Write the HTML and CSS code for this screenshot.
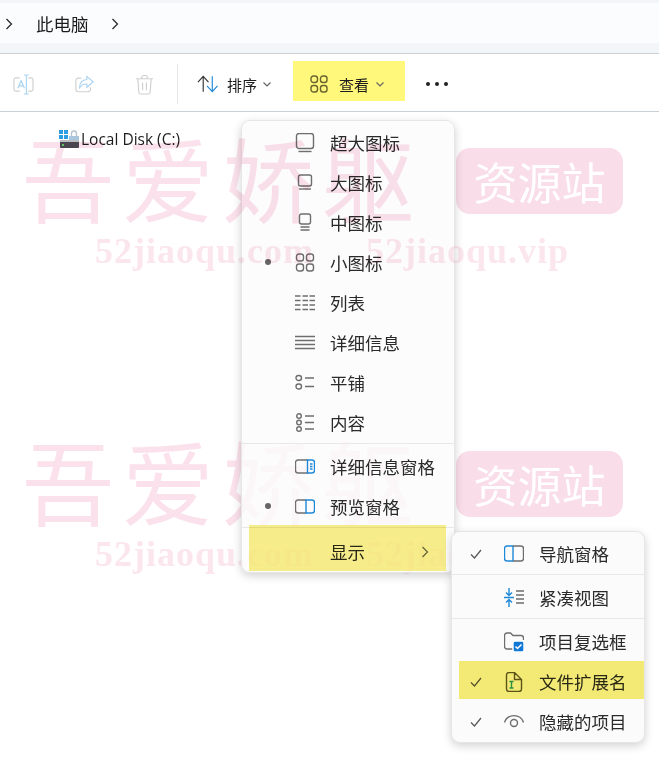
FILE: index.html
```html
<!DOCTYPE html>
<html lang="zh-CN">
<head>
    <meta charset="UTF-8">
    <meta name="viewport" content="width=device-width, initial-scale=1.0">
    <title>此电脑</title>
    <link rel="stylesheet" href="styles.css">
</head>
<body>
    <!-- Address bar -->
    <header class="address-bar">
        <div class="crumbs">
            <svg class="crumb-arrow" viewBox="0 0 8 12"><path d="M1.5 1l5 5-5 5"/></svg>
            <span class="crumb-name">此电脑</span>
            <svg class="crumb-arrow" viewBox="0 0 8 12"><path d="M1.5 1l5 5-5 5"/></svg>
        </div>
    </header>

    <!-- Command bar -->
    <nav class="toolbar">
        <svg class="tool-icon rename" viewBox="0 0 22 22">
            <path class="faint-gray" d="M7 4H3a2 2 0 0 0-2 2v10a2 2 0 0 0 2 2h4M16 4h3a2 2 0 0 1 2 2v10a2 2 0 0 1-2 2h-3"/>
            <path class="faint-blue" d="M5 15l3.5-8L12 15M6 12.5h5M11.5 1h5M11.5 21h5M14 1v20"/>
        </svg>
        <svg class="tool-icon share" viewBox="0 0 22 22">
            <path class="faint-gray" d="M7 4H4a3 3 0 0 0-3 3v9a3 3 0 0 0 3 3h10a3 3 0 0 0 3-3v-2"/>
            <path class="faint-blue" d="M13 2l7 6-7 6v-3.500c-4 0-6 1-8 4 0-5 3-8.500 8-9z"/>
        </svg>
        <svg class="tool-icon trash" viewBox="0 0 20 22">
            <path class="faint-gray" d="M1 5h18M7 5V3.500A2 2 0 0 1 9 1.500h2a2 2 0 0 1 2 2V5M3 5l1 14a2 2 0 0 0 2 2h8a2 2 0 0 0 2-2l1-14M8 9v8M12 9v8"/>
        </svg>
        <span class="tool-divider"></span>
        <button class="tool-btn sort-btn">
            <svg class="sort-icon" viewBox="0 0 22 18">
                <path class="line-dark" d="M1 7l5.500-6L12 7M6.500 1v16"/>
                <path class="line-blue" d="M10.500 11l5.500 6 5.500-6M16 17V1"/>
            </svg>
            <span>排序</span>
            <svg class="chevron" viewBox="0 0 8 5"><path d="M.5.500L4 4 7.500.500"/></svg>
        </button>
        <button class="tool-btn view-btn">
            <svg class="view-icon" viewBox="0 0 18 18">
                <rect x="1" y="1" width="6.500" height="6.500" rx="2.500"/>
                <rect x="10.500" y="1" width="6.500" height="6.500" rx="2.500"/>
                <rect x="1" y="10.500" width="6.500" height="6.500" rx="2.500"/>
                <rect x="10.500" y="10.500" width="6.500" height="6.500" rx="2.500"/>
            </svg>
            <span>查看</span>
            <svg class="chevron" viewBox="0 0 8 5"><path d="M.5.500L4 4 7.500.500"/></svg>
        </button>
        <div class="more-dots"><i></i><i></i><i></i></div>
    </nav>

    <!-- File list -->
    <main class="file-list">
        <div class="file-item">
            <svg class="disk-icon" viewBox="0 0 20 19">
                <rect x="0" y="0" width="4" height="4" fill="#2d9ce0"/>
                <rect x="5" y="0" width="4" height="4" fill="#2d9ce0"/>
                <rect x="0" y="5" width="4" height="4" fill="#2d9ce0"/>
                <rect x="5" y="5" width="4" height="4" fill="#2d9ce0"/>
                <path d="M12.500 6V3.500a2.500 2.500 0 0 1 5 0V6" fill="none" stroke="#b8c2ca" stroke-width="1.300"/>
                <rect x="10" y="6" width="10" height="6" fill="#a9c6dc"/>
                <rect x="1" y="11" width="19" height="7" rx="1" fill="#4a4f55"/>
                <rect x="1" y="10" width="19" height="2" fill="#b9bec2"/>
                <rect x="3" y="14" width="2" height="2" fill="#5fe070"/>
            </svg>
            <span>Local Disk (C:)</span>
        </div>
    </main>

    <!-- Lower watermark sits behind the menus -->
    <div class="watermark mark-lower">
        <span class="mark-title">吾爱娇躯</span>
        <span class="mark-badge">资源站</span>
        <span class="mark-url url-com">52jiaoqu.com</span>
        <span class="mark-url url-vip">52jiaoqu.vip</span>
    </div>

    <!-- View menu -->
    <div class="menu view-menu">
        <ul class="menu-group">
            <li class="menu-row">
                <span class="row-mark"></span>
                <svg class="row-icon" viewBox="0 0 20 20"><rect x="1.500" y="0.500" width="17" height="15" rx="2.500"/><path d="M3.500 18.500h13"/></svg>
                <span>超大图标</span>
            </li>
            <li class="menu-row">
                <span class="row-mark"></span>
                <svg class="row-icon" viewBox="0 0 20 20"><rect x="3.500" y="2" width="13" height="11" rx="2"/><path d="M4 16h12"/></svg>
                <span>大图标</span>
            </li>
            <li class="menu-row">
                <span class="row-mark"></span>
                <svg class="row-icon" viewBox="0 0 20 20"><rect x="4.500" y="1" width="11" height="10" rx="2"/><path d="M5.500 14h9M5.500 17h9"/></svg>
                <span>中图标</span>
            </li>
            <li class="menu-row">
                <span class="row-mark"><i class="dot"></i></span>
                <svg class="row-icon" viewBox="0 0 20 20"><rect x="1.500" y="1" width="7" height="7" rx="2.500"/><rect x="11.500" y="1" width="7" height="7" rx="2.500"/><rect x="1.500" y="11" width="7" height="7" rx="2.500"/><rect x="11.500" y="11" width="7" height="7" rx="2.500"/></svg>
                <span>小图标</span>
            </li>
            <li class="menu-row">
                <span class="row-mark"></span>
                <svg class="row-icon" viewBox="0 0 20 20"><path d="M0 3h5.500M0 7.500h5.500M0 12h5.500M0 16.500h5.500M7.500 3h5.500M7.500 7.500h5.500M7.500 12h5.500M7.500 16.500h5.500M14.500 3h5.500M14.500 7.500h5.500M14.500 12h5.500M14.500 16.500h5.500"/></svg>
                <span>列表</span>
            </li>
            <li class="menu-row">
                <span class="row-mark"></span>
                <svg class="row-icon" viewBox="0 0 20 20"><path d="M0 3.500h20M0 7.500h20M0 11.500h20M0 15.500h20"/></svg>
                <span>详细信息</span>
            </li>
            <li class="menu-row">
                <span class="row-mark"></span>
                <svg class="row-icon" viewBox="0 0 20 20"><rect x="1" y="2.500" width="5.500" height="5" rx="2.500"/><rect x="1" y="11" width="5.500" height="5" rx="2.500"/><path d="M10 5h9M10 13.500h9"/></svg>
                <span>平铺</span>
            </li>
            <li class="menu-row">
                <span class="row-mark"></span>
                <svg class="row-icon" viewBox="0 0 20 20"><circle cx="4" cy="3" r="2.300"/><circle cx="4" cy="9.500" r="2.300"/><circle cx="4" cy="16" r="2.300"/><path d="M10 3h9M10 9.500h9M10 16h9"/></svg>
                <span>内容</span>
            </li>
        </ul>
        <ul class="menu-group">
            <li class="menu-row">
                <span class="row-mark"></span>
                <svg class="row-icon" viewBox="0 0 20 20"><path d="M13 3H3a2.500 2.500 0 0 0-2.500 2.500v8A2.500 2.500 0 0 0 3 16h10"/><path class="line-blue" d="M12.500 3h4.500a2.500 2.500 0 0 1 2.500 2.500v8a2.500 2.500 0 0 1-2.500 2.500h-4.500zM15 7h2.500M15 9.500h2.500M15 12h2.500"/></svg>
                <span>详细信息窗格</span>
            </li>
            <li class="menu-row">
                <span class="row-mark"><i class="dot"></i></span>
                <svg class="row-icon" viewBox="0 0 20 20"><path d="M11 3H3a2.500 2.500 0 0 0-2.500 2.500v8A2.500 2.500 0 0 0 3 16h8"/><path class="line-blue" d="M11 3h6a2.500 2.500 0 0 1 2.500 2.500v8A2.500 2.500 0 0 1 17 16h-6zM11 3v13"/></svg>
                <span>预览窗格</span>
            </li>
        </ul>
        <div class="menu-row show-row">
            <span class="row-mark"></span>
            <span class="row-icon"></span>
            <span>显示</span>
            <svg class="row-arrow" viewBox="0 0 8 12"><path d="M1.500 1l5 5-5 5"/></svg>
        </div>
    </div>

    <!-- Show submenu -->
    <div class="menu show-menu">
        <div class="sub-row">
            <svg class="row-check" viewBox="0 0 12 10"><path d="M1 5.500L4.500 9 11 1"/></svg>
            <svg class="row-icon" viewBox="0 0 20 20"><path class="line-blue" d="M9 2H3A2.500 2.500 0 0 0 .5 4.500v10A2.500 2.500 0 0 0 3 17h6zM9 2v15"/><path d="M9 2h8a2.500 2.500 0 0 1 2.500 2.500v10A2.500 2.500 0 0 1 17 17H9"/></svg>
            <span>导航窗格</span>
        </div>
        <div class="sub-row ruled">
            <span class="row-check"></span>
            <svg class="row-icon" viewBox="0 0 20 20"><path class="line-blue" d="M5 0v7M2 4.500L5 7.500l3-3M0 9.500h10M5 19v-7M2 14.500l3-3 3 3"/><path d="M12 3h8M12 7h8M12 11h8M12 15h8"/></svg>
            <span>紧凑视图</span>
        </div>
        <div class="sub-row ruled">
            <span class="row-check"></span>
            <svg class="row-icon" viewBox="0 0 20 20"><path d="M9 17H3a2.500 2.500 0 0 1-2.500-2.500v-11A2.500 2.500 0 0 1 3 1h3.500l2.500 2.500h8A2.500 2.500 0 0 1 19.500 6v2"/><rect class="check-box" x="9" y="9" width="11" height="11" rx="2"/><path class="check-tick" d="M11.500 14.500l2 2 4-4"/></svg>
            <span>项目复选框</span>
        </div>
        <div class="sub-row">
            <svg class="row-check" viewBox="0 0 12 10"><path d="M1 5.500L4.500 9 11 1"/></svg>
            <svg class="row-icon ext-icon" viewBox="0 0 20 20"><path d="M10.500.500H5A2.500 2.500 0 0 0 2.500 3v14A2.500 2.500 0 0 0 5 19.500h10a2.500 2.500 0 0 0 2.500-2.500V7.500zM10.500.500V7.500h7"/><path class="line-teal" d="M5.500 9.500h4M5.500 16h4M7.500 9.500V16"/></svg>
            <span>文件扩展名</span>
        </div>
        <div class="sub-row">
            <svg class="row-check" viewBox="0 0 12 10"><path d="M1 5.500L4.500 9 11 1"/></svg>
            <svg class="row-icon" viewBox="0 0 20 20"><path d="M.5 10.500a10 10 0 0 1 19 0"/><circle cx="10" cy="11" r="3.500"/></svg>
            <span>隐藏的项目</span>
        </div>
    </div>

    <!-- Marker highlights laid over the screenshot -->
    <div class="marker marker-show"></div>
    <div class="marker marker-ext"></div>

    <!-- Upper watermark prints over the menu -->
    <div class="watermark mark-upper">
        <span class="mark-title">吾爱娇躯</span>
        <span class="mark-badge">资源站</span>
        <span class="mark-url url-com">52jiaoqu.com</span>
        <span class="mark-url url-vip">52jiaoqu.vip</span>
    </div>
</body>
</html>
```

FILE: styles.css
```css
html, body {
    height: 100%;
}
body {
    margin: 0;
    position: relative;
    overflow: hidden;
    background: #fff;
    color: #1c1c1c;
    font-family: "Noto Sans CJK SC", "Noto Sans", sans-serif;
}
ul {
    list-style: none;
    margin: 0;
    padding: 0;
}
svg {
    display: block;
    fill: none;
    stroke-width: 1.2;
}

/* address bar */
.address-bar {
    height: 54px;
    box-sizing: border-box;
    padding-top: 3px;
    background: #f3f6f9;
    border-bottom: 1px solid #c9d0d6;
}
.crumbs {
    height: 40px;
    display: flex;
    align-items: center;
    padding-left: 5px;
    background: #fbfcfe;
}
.crumb-arrow {
    width: 8px;
    height: 12px;
    margin-top: 2px;
    stroke: #222;
}
.crumb-name {
    margin: 0 22px 0 23px;
    font-size: 17.5px;
}

/* toolbar */
.toolbar {
    height: 58px;
    box-sizing: border-box;
    display: flex;
    align-items: center;
    padding: 3px 0 0 13px;
    border-bottom: 1px solid #c9d0d6;
}
.tool-icon {
    width: 21px;
    height: 21px;
}
.share {
    margin-left: 41px;
    width: 20px;
}
.trash {
    margin-left: 40px;
    width: 19px;
}
.faint-gray {
    stroke: #cfcfcf;
}
.faint-blue {
    stroke: #a9d3f2;
}
.tool-divider {
    width: 1px;
    height: 40px;
    margin-left: 23px;
    background: #e4e6e8;
}
.tool-btn {
    height: 40px;
    display: flex;
    align-items: center;
    border: 0;
    padding: 0;
    background: none;
    color: #1c1c1c;
    font: inherit;
    font-size: 15px;
}
.sort-btn {
    margin-left: 19px;
}
.sort-icon {
    width: 21px;
    height: 18px;
    margin-right: 9px;
}
.line-dark {
    stroke: #333;
}
.line-blue {
    stroke: #1e88d8;
}
.line-teal {
    stroke: #2c9a86;
    stroke-width: 1.4;
}
.chevron {
    width: 8px;
    height: 5px;
    margin-left: 6px;
    stroke: #666;
}
.view-btn {
    width: 112px;
    box-sizing: border-box;
    margin: 0 0 6px 22px;
    padding: 6px 0 0 17px;
    background: #fff87a;
}
.view-btn .chevron {
    margin-left: 7px;
}
.view-icon {
    width: 18px;
    height: 18px;
    margin-right: 11px;
    stroke: #6b6430;
    stroke-width: 1.4;
}
.more-dots {
    display: flex;
    gap: 5px;
    margin-left: 21px;
}
.more-dots i {
    width: 4px;
    height: 4px;
    border-radius: 50%;
    background: #222;
}

/* file list */
.file-list {
    padding: 16px 0 0 59px;
}
.file-item {
    display: flex;
    align-items: center;
    gap: 2px;
    height: 22px;
    font-family: "Open Sans", "Noto Sans", sans-serif;
    font-size: 15.500px;
}
.disk-icon {
    width: 20px;
    height: 19px;
}

/* menus */
.menu {
    position: absolute;
    z-index: 2;
    box-sizing: border-box;
    background: rgba(251, 251, 251, 0.78);
    border: 1px solid #e6e6e6;
    border-radius: 9px;
    box-shadow: 0 3px 10px rgba(0, 0, 0, 0.18);
    font-size: 17.5px;
    color: #2a2a2a;
}
.view-menu {
    left: 241px;
    top: 120px;
    width: 214px;
    height: 453px;
    padding-top: 2px;
}
.show-menu {
    left: 451px;
    top: 531px;
    width: 194px;
    height: 212px;
    padding-top: 2px;
    background: #fbfbfb;
}
.menu-group {
    border-bottom: 1px solid #e8e8e8;
}
.menu-row {
    height: 40px;
    display: flex;
    align-items: center;
    padding-left: 21px;
}
.menu-row > span,
.sub-row > span {
    padding-bottom: 2px;
}
.menu-group + .menu-group .menu-row:first-child {
    margin-top: 3px;
}
.show-row {
    height: 46px;
    box-sizing: border-box;
    padding-top: 2px;
}
.row-mark {
    width: 9px;
    margin-right: 23px;
    display: flex;
    justify-content: center;
}
.dot {
    width: 6px;
    height: 6px;
    border-radius: 50%;
    background: #666;
}
.row-icon {
    width: 20px;
    height: 20px;
    margin-right: 15px;
    stroke: #6e6e6e;
    stroke-width: 1.4;
    flex: none;
}
.row-arrow {
    width: 8px;
    height: 12px;
    margin-left: 56px;
    stroke: #666;
}
.sub-row {
    height: 40px;
    display: flex;
    align-items: center;
    padding-left: 18px;
}
.sub-row.ruled {
    height: 44px;
    box-sizing: border-box;
    padding-top: 3px;
    border-top: 1px solid #e8e8e8;
}
.row-check {
    width: 12px;
    height: 10px;
    margin-right: 22px;
    stroke: #555;
    flex: none;
}
.ext-icon {
    stroke: #5f5a30;
}
.check-box {
    fill: #0f78d4;
    stroke: #fff;
}
.check-tick {
    stroke: #fff;
    stroke-width: 1.5;
}

/* yellow marker strokes */
.marker {
    position: absolute;
    z-index: 3;
    background: #f9f08c;
    mix-blend-mode: multiply;
    pointer-events: none;
}
.marker-show {
    left: 249px;
    top: 525px;
    width: 197px;
    height: 46px;
}
.marker-ext {
    left: 459px;
    top: 661px;
    width: 185px;
    height: 38px;
    background: #f7ee78;
}

/* watermark */
.watermark {
    position: absolute;
    left: 0;
    width: 659px;
    height: 150px;
    color: #fbe1eb;
    pointer-events: none;
}
.mark-upper {
    top: 130px;
    z-index: 4;
    mix-blend-mode: multiply;
}
.mark-lower {
    top: 433px;
    z-index: 1;
}
.mark-title {
    position: absolute;
    left: 22px;
    top: -12px;
    font-size: 92px;
    line-height: 116px;
    font-weight: 400;
    letter-spacing: 8px;
    white-space: nowrap;
}
.mark-badge {
    position: absolute;
    left: 456px;
    top: 18px;
    width: 167px;
    height: 66px;
    border-radius: 14px;
    background: #f9dde8;
    color: #fff;
    font-size: 44px;
    line-height: 66px;
    font-weight: 400;
    text-align: center;
    white-space: nowrap;
}
.mark-url {
    position: absolute;
    top: 101px;
    font-family: "Liberation Serif", serif;
    font-weight: 700;
    font-size: 36px;
    line-height: 40px;
    letter-spacing: 1px;
    white-space: nowrap;
    color: #fce6ee;
}
.url-com {
    left: 95px;
}
.url-vip {
    left: 366px;
}
```
